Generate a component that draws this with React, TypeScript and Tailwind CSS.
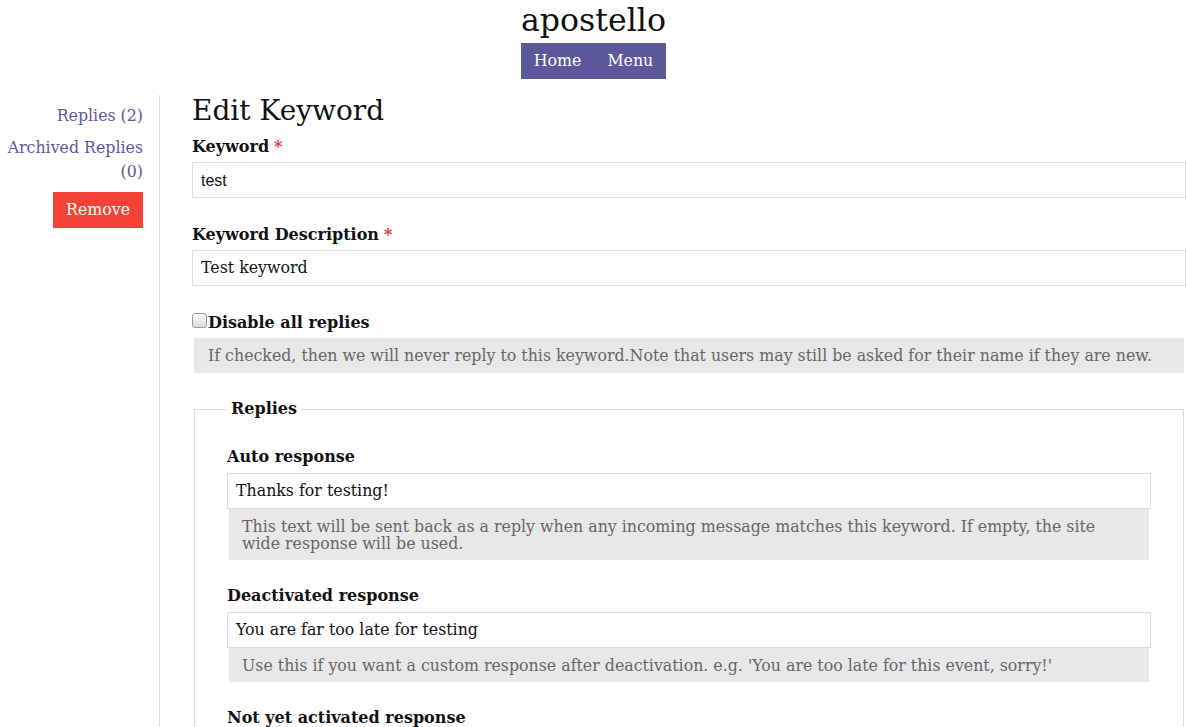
import React from 'react';

const serif = "font-['DejaVu_Serif',serif]";

function Field({ label, value, required, sans }: { label: string; value: string; required?: boolean; sans?: boolean }) {
  return (
    <div className="mb-[27px]">
      <label className="block font-bold text-[16px] leading-[20px] mb-[5px] text-[#111]">
        {label}
        {required && <span className="text-[#e53935] ml-[5px]">*</span>}
      </label>
      <div
        className={
          'h-[36px] border border-[#dcdcdc] bg-white px-[8px] flex items-center text-[#111] ' +
          (sans ? "font-['Liberation_Sans',sans-serif] text-[16px] pt-[1px]" : 'text-[15.8px]')
        }
      >
        {value}
      </div>
    </div>
  );
}

function Reply({ label, value, help }: { label: string; value: string; help: string }) {
  return (
    <div className="mb-[26px]">
      <label className="block font-bold text-[16px] leading-[20px] mb-[6px] text-[#111]">{label}</label>
      <div className="h-[36px] border border-[#dcdcdc] bg-white px-[8px] flex items-center text-[15.8px] text-[#111]">
        {value}
      </div>
      <div className="mx-[2px] bg-[#e8e8e8] text-[#666] text-[15.8px] leading-[17px] px-[13px] pt-[9px] pb-[8px]">{help}</div>
    </div>
  );
}

export default function App() {
  return (
    <div className={`${serif} bg-white min-h-[727px] text-[#111]`}>
      <header className="flex flex-col items-center">
        <h1 className="text-[31.6px] leading-[38px] pt-[1px] mb-[4px]">apostello</h1>
        <nav className="flex bg-[#5b589c] text-white text-[15.8px]">
          <a className="px-[13px] h-[36px] flex items-center">Home</a>
          <a className="px-[13px] h-[36px] flex items-center">Menu</a>
        </nav>
      </header>

      <div className="flex mt-[16px]">
        <aside className="w-[160px] shrink-0 border-r border-[#ddd] pr-[16px] text-right text-[15.8px] text-[#5b589c]">
          <div className="leading-[24px] pt-[9px]">Replies (2)</div>
          <div className="leading-[24px] mt-[8px]">Archived Replies (0)</div>
          <div className="flex justify-end mt-[8px]">
            <button className="bg-[#f44336] text-white h-[36px] px-[13px] text-[15.8px]">Remove</button>
          </div>
        </aside>

        <main className="flex-1 pl-[32px] pr-[1px]">
          <h2 className="text-[28px] leading-[32px] mb-[10px]">Edit Keyword</h2>
          <Field label="Keyword" value="test" required sans />
          <Field label="Keyword Description" value="Test keyword" required />

          <div className="flex items-center mt-[5px]">
            <span className="w-[15px] h-[15px] mr-[1px] -mt-[5px] rounded-[3px] border border-[#999] bg-gradient-to-b from-[#fafafa] to-[#dedede]" />
            <span className="font-bold text-[16px] leading-[20px]">Disable all replies</span>
          </div>
          <div className="mx-[2px] mt-[5px] bg-[#e8e8e8] text-[#666] text-[15.8px] leading-[18px] px-[14px] pt-[9px] pb-[8px]">
            If checked, then we will never reply to this keyword.Note that users may still be asked for their name if they are new.
          </div>

          <fieldset className="mt-[24px] mx-[2px] border border-[#ddd] px-[32px] pt-[26px] pb-[20px]">
            <legend className="font-bold text-[16px] px-[4px]">Replies</legend>
            <Reply
              label="Auto response"
              value="Thanks for testing!"
              help="This text will be sent back as a reply when any incoming message matches this keyword. If empty, the site wide response will be used."
            />
            <Reply
              label="Deactivated response"
              value="You are far too late for testing"
              help="Use this if you want a custom response after deactivation. e.g. 'You are too late for this event, sorry!'"
            />
            <label className="block font-bold text-[16px] leading-[20px] mt-[2px] mb-[6px]">Not yet activated response</label>
            <div className="h-[36px] border border-[#dcdcdc] bg-white" />
          </fieldset>
        </main>
      </div>
    </div>
  );
}
